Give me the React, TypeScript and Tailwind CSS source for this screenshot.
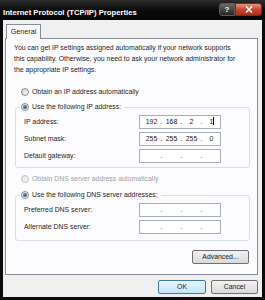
import React from "react"

// ─── Small pieces ───
function Radio({ checked = false, disabled = false }: { checked?: boolean; disabled?: boolean }) {
  return (
    <span
      className={`flex items-center justify-center w-[8px] h-[8px] rounded-full border shrink-0 bg-gradient-to-br ${
        disabled ? "border-[#c4c4c4] from-[#e6e6e6] to-[#f8f8f8]" : "border-[#8d8d8d] from-[#d4d4d4] to-[#fafafa]"
      }`}
    >
      {checked && <span className="w-[4px] h-[4px] rounded-full bg-gradient-to-br from-[#6f9bc4] to-[#1f4f7e]" />}
    </span>
  )
}

function IpField({ parts, caret = false }: { parts?: string[]; caret?: boolean }) {
  const vals = parts ?? ["", "", "", ""]
  return (
    <div className="flex items-center w-[82px] h-[14px] border border-[#a9afb8] bg-white pl-[3px] text-[6.9px] text-[#222]">
      {vals.map((v, i) => (
        <React.Fragment key={i}>
          {i > 0 && <span className="w-[3px] text-center">.</span>}
          <span className="relative w-[17px] text-center">
            {v}
            {caret && i === 3 && <span className="absolute left-[10px] top-[0px] w-[1px] h-[8px] bg-black" />}
          </span>
        </React.Fragment>
      ))}
    </div>
  )
}

function Row({ label, parts, caret }: { label: string; parts?: string[]; caret?: boolean }) {
  return (
    <div className="flex items-center h-[14px]">
      <span className="flex-1">{label}</span>
      <IpField parts={parts} caret={caret} />
    </div>
  )
}

function Button({ label, primary = false, width }: { label: string; primary?: boolean; width: string }) {
  return (
    <div
      className={`${width} h-[14px] flex items-center justify-center rounded-[2px] border text-[6.9px] text-[#222] bg-gradient-to-b ${
        primary ? "border-[#3d7bad] from-[#eaf6fd] to-[#bee6fd]" : "border-[#707070] from-[#f2f2f2] to-[#d9d9d9]"
      }`}
    >
      {label}
    </div>
  )
}

export default function App() {
  return (
    <div className="w-[265px] h-[300px] flex flex-col bg-[#0b0b0b] font-['Liberation_Sans',Arial,sans-serif] text-[6.9px] text-[#1e1e1e] overflow-hidden">
      {/* Title bar */}
      <div className="h-[20px] flex items-start bg-gradient-to-b from-[#2c2c2c] via-[#0c0c0c] to-[#050505]">
        <span className="pl-[3px] pt-[9px] text-[7.7px] font-bold text-white leading-none">Internet Protocol (TCP/IP) Properties</span>
        <div className="ml-auto mt-[3px] mr-[3px] flex">
          <div className="w-[16px] h-[13px] flex items-center justify-center rounded-l-[3px] border border-[#5a5a5a] bg-gradient-to-b from-[#6a6a6a] to-[#262626] text-white text-[8px] font-bold leading-none">
            ?
          </div>
          <div className="w-[27px] h-[13px] flex items-center justify-center rounded-r-[3px] border border-[#7a2a1e] bg-gradient-to-b from-[#e8937f] via-[#c9452c] to-[#a8311d]">
            <svg width="8" height="7" viewBox="0 0 8 7">
              <path d="M1 0.5 L7 6.5 M7 0.5 L1 6.5" stroke="white" strokeWidth="1.6" />
            </svg>
          </div>
        </div>
      </div>

      {/* Client area */}
      <div className="flex-1 mx-[3px] mb-[3px] flex flex-col bg-[#f0f0f0]">
        {/* Tab strip */}
        <div className="pl-[3px] pt-[4px] flex">
          <div className="w-[35px] h-[15px] -mb-[1px] flex items-center justify-center border border-b-0 border-[#898c95] bg-[#fcfcfe] z-10 text-[7.2px]">
            General
          </div>
        </div>

        {/* Tab panel */}
        <div className="ml-[2px] mr-[4px] flex flex-col border border-[#898c95] bg-[#fcfcfe] pt-[3px] pb-[10px]">
          <p className="pl-[8px] leading-[11px]">
            You can get IP settings assigned automatically if your network supports
            <br />
            this capability. Otherwise, you need to ask your network administrator for
            <br />
            the appropriate IP settings.
          </p>

          <div className="mt-[11px] ml-[15px] h-[12px] flex items-center gap-[3px]">
            <Radio />
            <span>Obtain an IP address automatically</span>
          </div>

          <fieldset className="mt-[3px] ml-[9px] mr-[7px] border border-[#d5dfe5] rounded-[3px] pb-[4px]">
            <legend className="ml-[4px] px-[1px] h-[12px] flex items-center gap-[3px]">
              <Radio checked />
              <span className="pr-[2px]">Use the following IP address:</span>
            </legend>
            <div className="mt-[2px] pl-[8px] pr-[28px] flex flex-col gap-[3px]">
              <Row label="IP address:" parts={["192", "168", "2", "1"]} caret />
              <Row label="Subnet mask:" parts={["255", "255", "255", "0"]} />
              <Row label="Default gateway:" />
            </div>
          </fieldset>

          <div className="mt-[5px] ml-[15px] h-[12px] flex items-center gap-[3px] text-[#a3a3a3]">
            <Radio disabled />
            <span>Obtain DNS server address automatically</span>
          </div>

          <fieldset className="mt-[4px] ml-[9px] mr-[7px] border border-[#d5dfe5] rounded-[3px] pb-[6px]">
            <legend className="ml-[4px] px-[1px] h-[12px] flex items-center gap-[3px]">
              <Radio checked />
              <span className="pr-[2px]">Use the following DNS server addresses:</span>
            </legend>
            <div className="mt-[2px] pl-[8px] pr-[28px] flex flex-col gap-[3px]">
              <Row label="Preferred DNS server:" />
              <Row label="Alternate DNS server:" />
            </div>
          </fieldset>

          <div className="mt-[9px] mr-[8px] flex justify-end">
            <Button label="Advanced..." width="w-[57px]" />
          </div>
        </div>

        {/* Dialog buttons */}
        <div className="mt-[5px] mr-[4px] flex justify-end gap-[5px]">
          <Button label="OK" primary width="w-[48px]" />
          <Button label="Cancel" width="w-[47px]" />
        </div>
      </div>
    </div>
  )
}
